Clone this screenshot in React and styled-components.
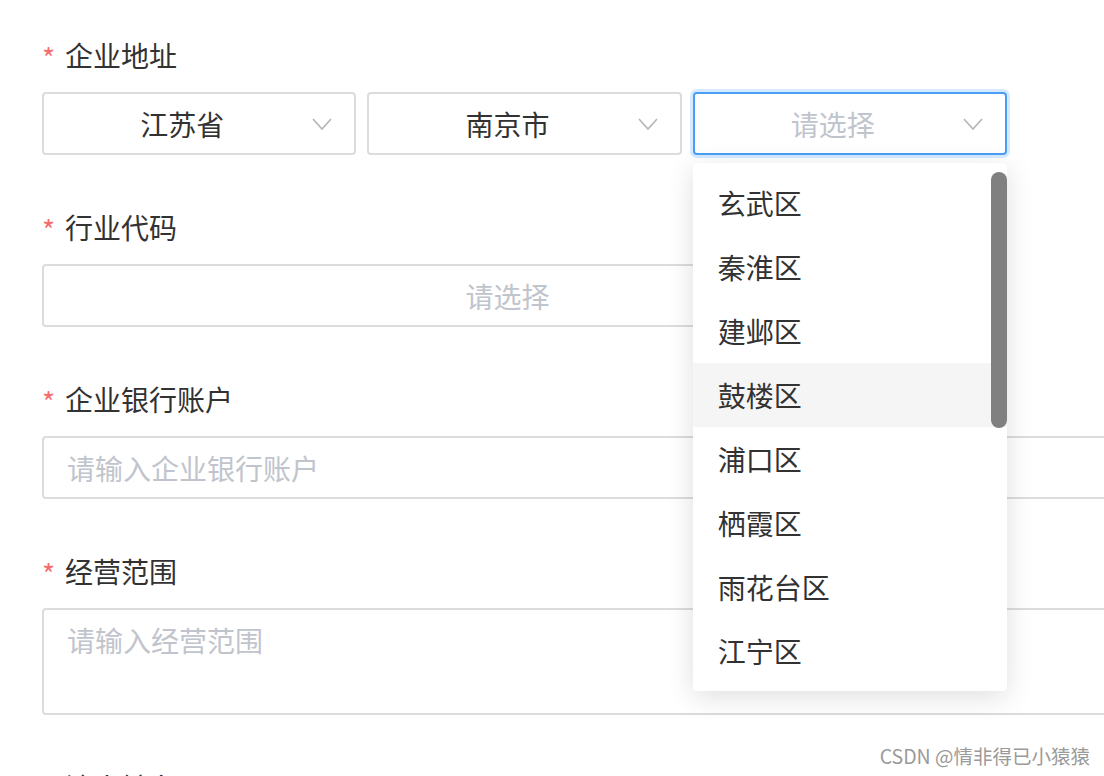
import styled, { createGlobalStyle } from 'styled-components';

const GlobalStyle = createGlobalStyle`
  html, body {
    margin: 0;
    padding: 0;
    height: 776px;
    overflow: hidden;
    background: #fff;
    font-family: "Noto Sans CJK SC", "Noto Sans", sans-serif;
  }
`;

const Page = styled.div`
  position: relative;
  height: 776px;
  overflow: hidden;
  padding: 35px 0 0 42px;
  box-sizing: border-box;
`;

const FormItem = styled.div`
  display: flex;
  flex-direction: column;
  gap: 17px;
  margin-bottom: 52px;
`;

const Label = styled.div`
  display: flex;
  align-items: center;
  height: 40px;
  font-size: 28px;
  color: #323233;
  line-height: 40px;
`;

const Star = styled.span`
  color: #f56c6c;
  font-size: 28px;
  width: 23px;
  margin-top: 4px;
`;

const SelectRow = styled.div`
  display: flex;
  gap: 11px;
  width: 965px;
`;

const SelectWrap = styled.div`
  position: relative;
  flex: 1;
`;

const SelectBox = styled.div`
  display: flex;
  align-items: center;
  height: 63px;
  box-sizing: border-box;
  padding-right: 22px;
  border: 2px solid ${(p) => (p.$focused ? '#4a9ef5' : '#dcdcdc')};
  border-radius: 4px;
  background: #fff;
  box-shadow: ${(p) => (p.$focused ? '0 0 0 3px rgba(64, 158, 255, 0.22)' : 'none')};
  width: ${(p) => p.$width || 'auto'};
`;

const Value = styled.div`
  flex: 1;
  padding-left: 8px;
  text-align: center;
  font-size: 28px;
  color: ${(p) => (p.$placeholder ? '#c0c4cc' : '#323233')};
`;

const TextBox = styled.div`
  width: 1120px;
  height: ${(p) => (p.$tall ? '107px' : '63px')};
  box-sizing: border-box;
  border: 2px solid #dcdcdc;
  border-radius: 4px;
  padding: ${(p) => (p.$tall ? '10px 23px' : '0 23px')};
  display: flex;
  align-items: ${(p) => (p.$tall ? 'flex-start' : 'center')};
  font-size: 28px;
  line-height: 40px;
  color: #c0c4cc;
`;

const Dropdown = styled.div`
  position: absolute;
  top: calc(100% + 8px);
  left: 0;
  right: 0;
  z-index: 10;
  background: #fff;
  border-radius: 4px;
  padding: 8px 0;
  box-shadow: 0 6px 28px rgba(0, 0, 0, 0.13);
`;

const Option = styled.div`
  height: 64px;
  display: flex;
  align-items: center;
  padding-left: 25px;
  font-size: 28px;
  color: #323233;
  background: ${(p) => (p.$hover ? '#f5f5f5' : 'transparent')};
`;

const Thumb = styled.div`
  position: absolute;
  top: 9px;
  right: 0;
  width: 16px;
  height: 256px;
  border-radius: 8px;
  background: #808080;
`;

const Watermark = styled.div`
  position: absolute;
  right: 14px;
  bottom: 6px;
  font-size: 19.5px;
  color: #9a9a9a;
  text-shadow: 0 0 2px #fff;
  z-index: 20;
`;

function Chevron() {
  return (
    <svg width="20" height="12" viewBox="0 0 20 12" fill="none">
      <path d="M1 1 L10 11 L19 1" stroke="#b4b4b4" strokeWidth="1.6" />
    </svg>
  );
}

function Select({ value, placeholder, focused, width, children }) {
  return (
    <SelectBox $focused={focused} $width={width}>
      <Value $placeholder={!value}>{value || placeholder}</Value>
      <Chevron />
      {children}
    </SelectBox>
  );
}

const districts = ['玄武区', '秦淮区', '建邺区', '鼓楼区', '浦口区', '栖霞区', '雨花台区', '江宁区'];

export default function App() {
  return (
    <Page>
      <GlobalStyle />
      <FormItem>
        <Label><Star>*</Star>企业地址</Label>
        <SelectRow>
          <SelectWrap><Select value="江苏省" /></SelectWrap>
          <SelectWrap><Select value="南京市" /></SelectWrap>
          <SelectWrap>
            <Select placeholder="请选择" focused />
            <Dropdown>
              {districts.map((d) => (
                <Option key={d} $hover={d === '鼓楼区'}>{d}</Option>
              ))}
              <Thumb />
            </Dropdown>
          </SelectWrap>
        </SelectRow>
      </FormItem>
      <FormItem>
        <Label><Star>*</Star>行业代码</Label>
        <Select placeholder="请选择" width="965px" />
      </FormItem>
      <FormItem>
        <Label><Star>*</Star>企业银行账户</Label>
        <TextBox>请输入企业银行账户</TextBox>
      </FormItem>
      <FormItem>
        <Label><Star>*</Star>经营范围</Label>
        <TextBox $tall>请输入经营范围</TextBox>
      </FormItem>
      <FormItem>
        <Label><Star>*</Star>法人姓名</Label>
      </FormItem>
      <Watermark>CSDN @情非得已小猿猿</Watermark>
    </Page>
  );
}
